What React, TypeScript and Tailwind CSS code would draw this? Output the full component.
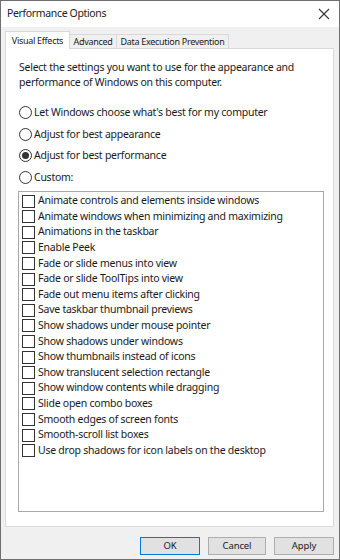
import React from 'react';

const effects = [
  'Animate controls and elements inside windows',
  'Animate windows when minimizing and maximizing',
  'Animations in the taskbar',
  'Enable Peek',
  'Fade or slide menus into view',
  'Fade or slide ToolTips into view',
  'Fade out menu items after clicking',
  'Save taskbar thumbnail previews',
  'Show shadows under mouse pointer',
  'Show shadows under windows',
  'Show thumbnails instead of icons',
  'Show translucent selection rectangle',
  'Show window contents while dragging',
  'Slide open combo boxes',
  'Smooth edges of screen fonts',
  'Smooth-scroll list boxes',
  'Use drop shadows for icon labels on the desktop',
];

const modes = [
  "Let Windows choose what's best for my computer",
  'Adjust for best appearance',
  'Adjust for best performance',
  'Custom:',
];

function Radio({ label, checked }: { label: string; checked?: boolean }) {
  return (
    <div className="flex h-[21.6px] items-center">
      <span className="flex h-[13px] w-[13px] shrink-0 items-center justify-center rounded-full border border-[#333] bg-white">
        {checked && <span className="h-[7px] w-[7px] rounded-full bg-[#333]" />}
      </span>
      <span className="ml-[2px] whitespace-nowrap">{label}</span>
    </div>
  );
}

export default function App() {
  return (
    <div
      className="flex h-[560px] w-[340px] flex-col border border-[#6f6f6f] bg-[#f0f0f0] text-[10.5px] tracking-[-0.25px] text-[#1a1a1a]"
      style={{ fontFamily: '"Noto Sans", sans-serif' }}
    >
      <div className="flex h-[26px] shrink-0 items-center justify-between bg-white pl-[6px] pr-[9px]">
        <span className="text-[10.5px] tracking-[-0.35px] text-[#222]">Performance Options</span>
        <svg width="12" height="12" viewBox="0 0 12 12" className="text-[#333]">
          <path d="M1 1L11 11M11 1L1 11" stroke="currentColor" strokeWidth="1.1" />
        </svg>
      </div>

      <div className="flex flex-1 flex-col pl-[4px] pr-[5px] pt-[4px]">
        <div className="relative z-10 flex h-[18px] items-end whitespace-nowrap text-[9px] tracking-[-0.3px]">
          <div className="flex h-[18px] w-[65px] items-center justify-center border border-b-0 border-[#d9d9d9] bg-white">
            Visual Effects
          </div>
          <div className="flex h-[15px] w-[47px] items-center justify-center border border-b-0 border-l-0 border-[#d9d9d9]">
            Advanced
          </div>
          <div className="flex h-[15px] w-[112px] items-center justify-center border border-b-0 border-l-0 border-[#d9d9d9]">
            Data Execution Prevention
          </div>
        </div>

        <div className="-mt-px flex h-[479px] flex-col border border-[#d9d9d9] bg-white pl-[12px] pr-[9px] pt-[11px]">
          <p className="pl-[1px] leading-[15px]">
            Select the settings you want to use for the appearance and
            <br />
            performance of Windows on this computer.
          </p>
          <div className="mt-[12px] pl-[1px]">
            {modes.map((m) => (
              <Radio key={m} label={m} checked={m === 'Adjust for best performance'} />
            ))}
          </div>
          <div className="mt-[3px] h-[321px] border border-[#a9a9a9] pl-[3px] pt-[1px]">
            {effects.map((e) => (
              <div key={e} className="flex h-[15.6px] items-center">
                <span className="h-[13px] w-[13px] shrink-0 border border-[#333] bg-white" />
                <span className="ml-[3px] whitespace-nowrap">{e}</span>
              </div>
            ))}
          </div>
        </div>

        <div className="mt-[10px] flex justify-end gap-[8px] text-[9.5px] tracking-[-0.1px]">
          <button className="h-[18px] w-[60px] border border-[#0078d7] bg-[#e1e1e1]">OK</button>
          <button className="h-[18px] w-[58px] border border-[#adadad] bg-[#e1e1e1]">Cancel</button>
          <button className="h-[18px] w-[60px] border border-[#adadad] bg-[#e1e1e1]">Apply</button>
        </div>
      </div>
    </div>
  );
}
